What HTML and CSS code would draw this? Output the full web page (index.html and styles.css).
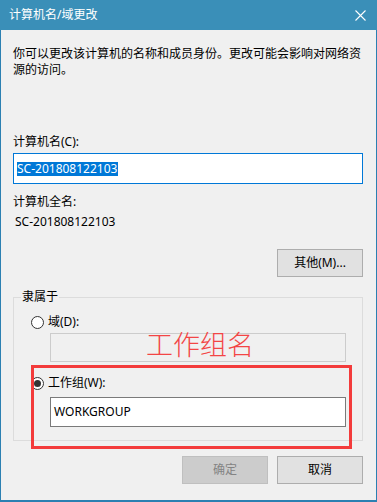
FILE: index.html
```html
<!DOCTYPE html>
<html lang="zh-CN">
<head>
<meta charset="utf-8">
<title>计算机名/域更改</title>
<link rel="stylesheet" href="styles.css">
</head>
<body>
<div class="window">
  <div class="titlebar">
    <span class="title">计算机名/域更改</span>
    <svg class="close" width="11" height="11" viewBox="0 0 11 11"><path d="M0.5 0.5L10.5 10.5M10.5 0.5L0.5 10.5" stroke="#fff" stroke-width="1.1" fill="none"/></svg>
  </div>
  <div class="body">
    <p class="desc">你可以更改该计算机的名称和成员身份。更改可能会影响对网络资源的访问。</p>
    <div class="label label-name">计算机名(C):</div>
    <div class="input input-focus"><span class="sel">SC-201808122103</span></div>
    <div class="label label-full">计算机全名:</div>
    <div class="value">SC-201808122103</div>
    <div class="row-right">
      <button class="btn btn-more">其他(M)...</button>
    </div>
    <fieldset class="group">
      <legend>隶属于</legend>
      <div class="group-inner">
        <div class="radio-row radio-domain"><span class="radio"></span><span>域(D):</span></div>
        <div class="input input-disabled"></div>
        <div class="radio-row radio-wg"><span class="radio checked"></span><span>工作组(W):</span></div>
        <div class="input input-normal">WORKGROUP</div>
      </div>
    </fieldset>
    <div class="buttons">
      <button class="btn btn-disabled">确定</button>
      <button class="btn">取消</button>
    </div>
  </div>
  <div class="annot-box"></div>
  <div class="annot-text">工作组名</div>
</div>
</body>
</html>
```
FILE: styles.css
```css
* { box-sizing: border-box; }
html, body { margin: 0; padding: 0; }
body {
  width: 377px;
  height: 502px;
  background: #f0f0f0;
  font-family: "Noto Sans", "Noto Sans CJK SC", sans-serif;
  font-size: 12px;
  color: #000;
  overflow: hidden;
}
.window {
  position: relative;
  width: 377px;
  height: 502px;
  display: flex;
  flex-direction: column;
}
.titlebar {
  height: 30px;
  flex: none;
  background: #3a8fb8;
  color: #fff;
  display: flex;
  align-items: center;
  justify-content: space-between;
  padding: 0 11px 0 9px;
  line-height: 16px;
}
.title { font-size: 12px; }
.close { display: block; }
.body {
  flex: 1;
  background: #f0f0f0;
  border-left: 1px solid #2b80b2;
  border-right: 1px solid #2b80b2;
  border-bottom: 2px solid #2b80b2;
  padding: 0 13px 0 12px;
  display: flex;
  flex-direction: column;
}
.desc {
  margin: 16px 0 0 0;
  line-height: 16px;
}
.label { line-height: 16px; }
.label-name { margin-top: 56px; }
.input {
  background: #fff;
  border: 1px solid #7a7a7a;
  line-height: 14px;
  padding: 0 3px;
  display: flex;
  align-items: center;
}
.input-focus {
  margin-top: 3px;
  height: 31px;
  border-color: #0078d7;
  padding-left: 3px;
}
.sel {
  background: #0078d7;
  color: #fff;
  line-height: 14px;
  padding: 0 1px 0 0;
}
.label-full { margin-top: 10px; }
.value { margin-top: 4px; line-height: 16px; padding-left: 2px; }
.row-right {
  display: flex;
  justify-content: flex-end;
  margin-top: 19px;
}
.btn {
  width: 86px;
  height: 28px;
  background: #e1e1e1;
  border: 1px solid #adadad;
  font: inherit;
  font-size: 12px;
  color: #000;
  padding: 0;
  line-height: 16px;
}
.btn-disabled {
  background: #cccccc;
  border-color: #bfbfbf;
  color: #838383;
}
.group {
  margin: 12px 0 0 0;
  border: 1px solid #dcdcdc;
  padding: 0 0 0 7px;
  min-width: 0;
}
.group legend {
  padding: 0 1px;
  line-height: 16px;
}
.group-inner {
  padding: 9px 16px 13px 10px;
  display: flex;
  flex-direction: column;
}
.radio-row {
  display: flex;
  align-items: center;
  gap: 4px;
  line-height: 16px;
}
.radio {
  width: 13px;
  height: 13px;
  border: 1px solid #333;
  border-radius: 50%;
  background: #fff;
  display: flex;
  align-items: center;
  justify-content: center;
}
.radio.checked::after {
  content: "";
  width: 7px;
  height: 7px;
  border-radius: 50%;
  background: #333;
}
.input-disabled {
  margin: 3px 0 0 19px;
  height: 29px;
  background: #f0f0f0;
  border-color: #cccccc;
}
.radio-wg { margin-top: 13px; }
.input-normal {
  margin: 6px 0 0 19px;
  height: 30px;
  padding-left: 3px;
}
.buttons {
  display: flex;
  justify-content: flex-end;
  gap: 9px;
  margin-top: 15px;
}
.annot-box {
  position: absolute;
  left: 31px;
  top: 365px;
  width: 321px;
  height: 84px;
  border: 3px solid #f33b3b;
}
.annot-text {
  position: absolute;
  left: 146px;
  top: 326px;
  font-family: "Noto Sans CJK SC", sans-serif;
  font-weight: 200;
  font-size: 27px;
  line-height: 36px;
  color: #f34545;
}
```
